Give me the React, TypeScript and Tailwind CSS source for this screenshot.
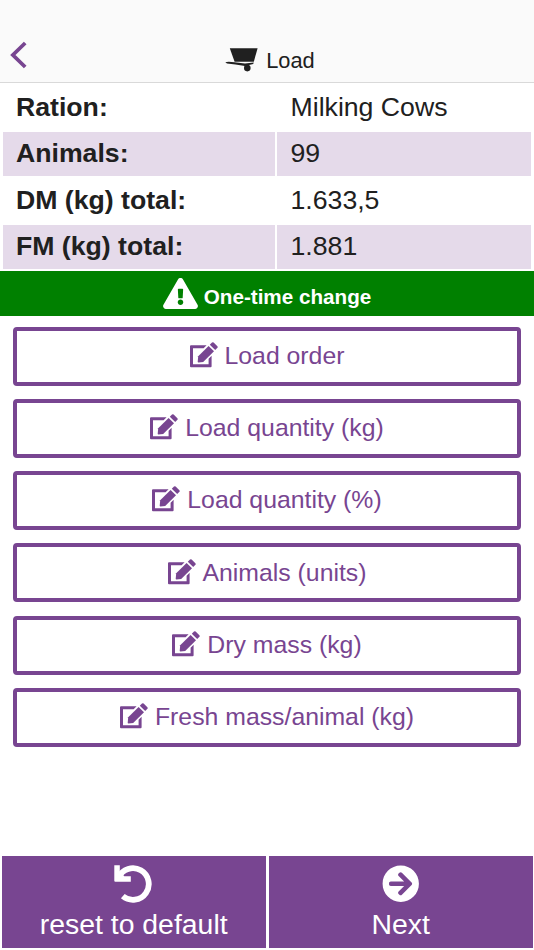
import React from 'react';
import { FaArrowCircleRight, FaExclamationTriangle } from 'react-icons/fa';

interface RationRow {
  label: string;
  value: string;
}

const rows: RationRow[] = [
  { label: 'Ration:', value: 'Milking Cows' },
  { label: 'Animals:', value: '99' },
  { label: 'DM (kg) total:', value: '1.633,5' },
  { label: 'FM (kg) total:', value: '1.881' },
];

const actions = [
  'Load order',
  'Load quantity (kg)',
  'Load quantity (%)',
  'Animals (units)',
  'Dry mass (kg)',
  'Fresh mass/animal (kg)',
];

const BarrowIcon = () => (
  <svg className="mb-[2px]" width="33" height="24" viewBox="0 0 33 24" fill="currentColor">
    <path d="M4.8 0.3H32.6L28.8 13.8H9.6Z" />
    <path d="M0.3 14.3C2.5 13.3 6 13.8 9.4 14.2L20 15.6L28.8 14.5L28.2 16L20 18L10.5 16.4L2 15.4Z" />
    <circle cx="22.3" cy="20.1" r="3.3" />
  </svg>
);

const EditIcon = () => (
  <svg className="mr-[7px] mb-[2px]" width="28" height="26" viewBox="0 0 28 26" fill="currentColor">
    <path d="M1 3.2H16.6L13.6 6.2H3V22.2H18.6V16.7L21.6 13.8V24.2Q21.6 25.2 20.6 25.2H1Q0 25.2 0 24.2V4.2Q0 3.2 1 3.2Z" />
    <path d="M18.6 3.9L24 9.2L13.2 20L8.4 20.4Q7.7 20.4 7.7 19.7L8.2 14.2Z" />
    <path d="M19.8 2.7L22 0.5Q22.8 -0.2 23.6 0.5L27.4 4.2Q28.1 5 27.4 5.8L25.2 8Z" />
  </svg>
);

const UndoIcon = () => (
  <svg className="-ml-[1px]" width="38" height="38" viewBox="0 0 38 38" fill="currentColor">
    <path d="M0.3 0.3H5.8V6.8L10.3 11.2H16.8V16.8H1.3Q0.3 16.8 0.3 15.8Z" />
    <path
      d="M4.6 12.4A15.8 15.8 0 1 1 8.8 31.1"
      fill="none"
      stroke="currentColor"
      strokeWidth="5.8"
    />
  </svg>
);

const Header = () => (
  <header className="flex h-[83px] items-end border-b border-[#d9d9d9] bg-[#fafafa]">
    <button className="mb-[13px] ml-[10px] w-[18px] text-[#784591]" aria-label="Back">
      <svg width="18" height="28" viewBox="0 0 18 28" fill="none" stroke="currentColor" strokeWidth="3.8">
        <path d="M15.2 2L2.9 14L15.2 26" />
      </svg>
    </button>
    <div className="mr-[28px] flex flex-1 items-end justify-center pr-[6px] pb-[8px] pl-[12px]">
      <BarrowIcon />
      <h1 className="ml-[8px] text-[21.8px] leading-[26px]">Load</h1>
    </div>
  </header>
);

const RationTable = () => (
  <dl className="grid h-[188.3px] shrink-0 grid-cols-[271.9px_1fr] grid-rows-4 gap-[2.67px] p-[2.67px] text-[26.67px] leading-[30px]">
    {rows.map((row) => (
      <React.Fragment key={row.label}>
        <dt className="flex items-center px-[13.3px] pb-[1px] font-bold nth-[4n+3]:bg-[#e5daea]">{row.label}</dt>
        <dd className="flex items-center px-[13.3px] pb-[1px] nth-[4n]:bg-[#e5daea]">{row.value}</dd>
      </React.Fragment>
    ))}
  </dl>
);

export default function App() {
  return (
    <div className="flex h-[950px] w-[534px] flex-col bg-white font-['Liberation_Sans',Arial,sans-serif] text-[#202020]">
      <Header />
      <RationTable />
      <div className="flex h-[45px] shrink-0 items-end justify-center bg-[#008000] pb-[7px] text-white">
        <FaExclamationTriangle className="h-[31px] w-[35px]" />
        <span className="ml-[6px] text-[20.67px] leading-[24px] font-bold">One-time change</span>
      </div>
      <main className="flex flex-1 flex-col gap-[13.3px] px-[13.3px] pt-[10.3px]">
        {actions.map((action) => (
          <button
            key={action}
            className="flex h-[59px] items-center justify-center rounded-[4px] border-4 border-[#784591] pb-[0.6px] text-[24.8px] leading-[30px] text-[#784591]"
          >
            <EditIcon />
            {action}
          </button>
        ))}
      </main>
      <footer className="flex gap-[2.8px] pr-[1.3px] pb-[1.7px] pl-[1.6px] text-[28.4px] leading-[34px] text-white">
        <button className="flex h-[92.8px] flex-1 flex-col items-center bg-[#784591] pt-[9.5px]">
          <span className="mb-[4px] h-[37.5px]">
            <UndoIcon />
          </span>
          reset to default
        </button>
        <button className="flex h-[92.8px] flex-1 flex-col items-center bg-[#784591] pt-[9.5px]">
          <FaArrowCircleRight className="mb-[4px] size-[37.5px]" />
          Next
        </button>
      </footer>
    </div>
  );
}
